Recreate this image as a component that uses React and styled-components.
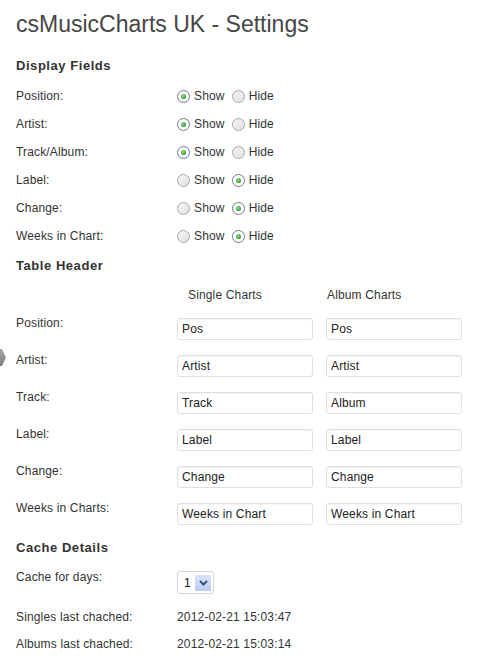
import React from "react";
import styled, { createGlobalStyle } from "styled-components";

const Global = createGlobalStyle`
  html, body { margin: 0; padding: 0; background: #fff; }
  body { font-family: "Liberation Sans", Arial, sans-serif; color: #333; font-size: 12px; }
`;

const Page = styled.div`
  position: relative;
  padding: 0 0 0 16px;
  width: 489px;
  height: 656px;
  box-sizing: border-box;
  overflow: hidden;
`;

const Title = styled.h2`
  margin: 10px 0 0;
  font-size: 23px;
  line-height: 29px;
  font-weight: normal;
  color: #464646;
`;

const Heading = styled.h3`
  margin: ${(p) => p.$top}px 0 0;
  font-size: 13px;
  line-height: 16px;
  font-weight: bold;
  letter-spacing: 0.55px;
  color: #333;
`;

const Label = styled.div`
  line-height: 14px;
  letter-spacing: 0.15px;
`;

const RadioList = styled.div`
  margin-top: 8px;
  display: flex;
  flex-direction: column;
`;

const RadioRow = styled.div`
  display: grid;
  grid-template-columns: 161px auto;
  align-items: center;
  height: 28px;
`;

const Options = styled.div`
  display: flex;
  align-items: center;
`;

const Option = styled.label`
  display: flex;
  align-items: center;
  gap: 4px;
  margin-right: 7px;
  line-height: 14px;
  letter-spacing: 0.15px;
`;

const Radio = styled.span`
  position: relative;
  width: 13px;
  height: 13px;
  box-sizing: border-box;
  border-radius: 50%;
  border: 1px solid ${(p) => (p.$on ? "#6b7a8c" : "#a9a9a9")};
  background: ${(p) =>
    p.$on ? "#fff" : "linear-gradient(135deg, #f4f4f4 0%, #e2e2e2 100%)"};
  &::after {
    content: "";
    display: ${(p) => (p.$on ? "block" : "none")};
    position: absolute;
    left: 3px;
    top: 3px;
    width: 5px;
    height: 5px;
    border-radius: 50%;
    background: radial-gradient(circle at 40% 40%, #8fe08a 0%, #2f9a2f 70%);
  }
`;

const TableHead = styled.div`
  display: grid;
  grid-template-columns: 161px auto;
  height: 42px;
  padding-top: 14px;
  box-sizing: border-box;
`;

const Pair = styled.div`
  display: flex;
  gap: 13px;
`;

const ColTitle = styled.div`
  width: 136px;
  box-sizing: border-box;
  line-height: 14px;
  letter-spacing: 0.15px;
  padding-left: ${(p) => p.$indent}px;
`;

const InputRow = styled.div`
  display: grid;
  grid-template-columns: 161px auto;
  height: 37px;
  align-items: start;
`;

const TextInput = styled.input`
  margin: 2px 0 0;
  width: 136px;
  height: 22px;
  box-sizing: border-box;
  border: 1px solid #dfdfdf;
  border-radius: 3px;
  padding: 0 4px;
  font-family: "Liberation Sans", Arial, sans-serif;
  font-size: 12px;
  letter-spacing: 0.15px;
  color: #222;
  background: #fff;
  box-shadow: inset 0 1px 1px rgba(0, 0, 0, 0.04);
  outline: none;
`;

const CacheList = styled.div`
  margin-top: 14px;
  display: flex;
  flex-direction: column;
`;

const CacheRow = styled.div`
  display: grid;
  grid-template-columns: 161px auto;
  height: ${(p) => p.$h}px;
  align-items: start;
`;

const Select = styled.div`
  margin-top: 1px;
  width: 37px;
  height: 23px;
  box-sizing: border-box;
  border: 1px solid #d4d4d4;
  border-radius: 3px;
  background: #fff;
  display: flex;
  align-items: center;
  justify-content: space-between;
  padding: 0 2px 0 6px;
  font-size: 12px;
  color: #111;
`;

const SelectButton = styled.span`
  width: 16px;
  height: 16px;
  background: linear-gradient(180deg, #d7e3f8 0%, #b9cdf0 100%);
  display: flex;
  align-items: center;
  justify-content: center;
`;

const Value = styled.div`
  line-height: 14px;
  letter-spacing: 0.15px;
`;

const SideArrow = styled.svg`
  position: absolute;
  left: 0;
  top: 349px;
`;

const radios = [
  ["Position:", true],
  ["Artist:", true],
  ["Track/Album:", true],
  ["Label:", false],
  ["Change:", false],
  ["Weeks in Chart:", false],
];

const headers = [
  ["Position:", "Pos", "Pos"],
  ["Artist:", "Artist", "Artist"],
  ["Track:", "Track", "Album"],
  ["Label:", "Label", "Label"],
  ["Change:", "Change", "Change"],
  ["Weeks in Charts:", "Weeks in Chart", "Weeks in Chart"],
];

export default function App() {
  return (
    <Page>
      <Global />
      <SideArrow width="7" height="17" viewBox="0 0 7 17">
        <defs>
          <linearGradient id="ag" x1="0" y1="0" x2="0" y2="1">
            <stop offset="0" stopColor="#a4a4a4" />
            <stop offset="1" stopColor="#7d7d7d" />
          </linearGradient>
        </defs>
        <polygon points="0,0 2,0 6,8.5 2,17 0,17" fill="url(#ag)" />
      </SideArrow>

      <Title>csMusicCharts UK - Settings</Title>

      <Heading $top={19}>Display Fields</Heading>
      <RadioList>
        {radios.map(([label, show]) => (
          <RadioRow key={label}>
            <Label>{label}</Label>
            <Options>
              <Option>
                <Radio $on={show} />
                Show
              </Option>
              <Option>
                <Radio $on={!show} />
                Hide
              </Option>
            </Options>
          </RadioRow>
        ))}
      </RadioList>

      <Heading $top={8}>Table Header</Heading>
      <TableHead>
        <span />
        <Pair>
          <ColTitle $indent={11}>Single Charts</ColTitle>
          <ColTitle $indent={1}>Album Charts</ColTitle>
        </Pair>
      </TableHead>
      {headers.map(([label, a, b]) => (
        <InputRow key={label}>
          <Label>{label}</Label>
          <Pair>
            <TextInput defaultValue={a} />
            <TextInput defaultValue={b} />
          </Pair>
        </InputRow>
      ))}

      <Heading $top={2}>Cache Details</Heading>
      <CacheList>
        <CacheRow $h={39.5}>
          <Label>Cache for days:</Label>
          <Select>
            1
            <SelectButton>
              <svg width="9" height="6" viewBox="0 0 9 6">
                <path d="M1 1 L4.5 4.5 L8 1" stroke="#3d4f7a" strokeWidth="2" fill="none" />
              </svg>
            </SelectButton>
          </Select>
        </CacheRow>
        <CacheRow $h={27}>
          <Label>Singles last chached:</Label>
          <Value>2012-02-21 15:03:47</Value>
        </CacheRow>
        <CacheRow $h={27}>
          <Label>Albums last chached:</Label>
          <Value>2012-02-21 15:03:14</Value>
        </CacheRow>
      </CacheList>
    </Page>
  );
}
